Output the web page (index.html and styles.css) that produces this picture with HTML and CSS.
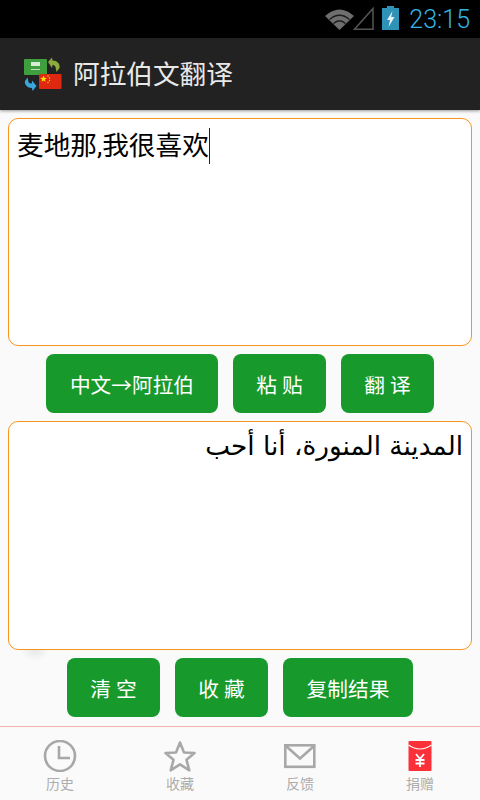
FILE: index.html
```html
<!DOCTYPE html>
<html lang="zh-CN">
<head>
    <meta charset="UTF-8">
    <meta name="viewport" content="width=device-width, initial-scale=1.0">
    <title>阿拉伯文翻译</title>
    <link rel="stylesheet" href="styles.css">
</head>
<body>
    <div class="app">
        <!-- 状态栏 -->
        <div class="status-bar">
            <svg class="icon-wifi" width="29" height="24" viewBox="326 6 29 24">
                <path d="M326 16 Q340.5 3 355 16 L340.5 30 Z" fill="#6e6e6e"/>
                <path d="M330.5 19.5 Q340.5 11 350.5 19.5 M334.5 23.5 Q340.5 18 346.5 23.5" fill="none" stroke="#1c1c1c" stroke-width="1.3"/>
            </svg>
            <svg class="icon-signal" width="21" height="24" viewBox="354 6 21 24">
                <path d="M374 8.5 V29.2 H355.5 Z" fill="none" stroke="#555" stroke-width="1.5"/>
            </svg>
            <svg class="icon-battery" width="17" height="24" viewBox="383 6 17 24">
                <path d="M388 6 H395 V8 H400 V30 H383 V8 H388 Z" fill="#2f93b8"/>
                <path d="M393.5 11 L388 20 H391 L389.5 27 L395.5 17 H392.2 Z" fill="#e4f2f7"/>
            </svg>
            <span class="clock">23:15</span>
        </div>

        <!-- 标题栏 -->
        <div class="action-bar">
            <svg class="logo" width="48" height="42" viewBox="20 52 48 42">
                <rect x="24" y="59" width="23" height="16" rx="1" fill="#3f9f3f"/>
                <rect x="31" y="62" width="9" height="4" fill="#d8ecd8"/>
                <rect x="31" y="69" width="9" height="1" fill="#bfe0bf"/>
                <path d="M48 62 L52 57.5 L52.5 60.5 C57 60.5 60.5 64 59.5 68 L56.5 72 L55.5 67 C55 65.5 53.5 65 52.5 65 L52 68 Z" fill="#8bab3c"/>
                <path d="M36.5 86 L32.5 91 L32 88 C27.5 88 24 84.5 25 81 L27.5 77.5 L28.5 82 C29 83 30.5 83.5 31.8 83.5 L32 80.5 Z" fill="#3aa6dc"/>
                <rect x="39" y="74" width="22.5" height="15" rx="1" fill="#de2910"/>
                <path d="M43.5 75.5 l.9 2.3 2.4 .1 -1.9 1.5 .7 2.4 -2.1 -1.4 -2.1 1.4 .7 -2.4 -1.9 -1.5 2.4 -.1 Z" fill="#ffde00"/>
                <circle cx="48" cy="76" r=".7" fill="#ffde00"/>
                <circle cx="49.5" cy="78" r=".7" fill="#ffde00"/>
                <circle cx="49.5" cy="80.5" r=".7" fill="#ffde00"/>
                <circle cx="48" cy="82.5" r=".7" fill="#ffde00"/>
            </svg>
            <h1 class="title">阿拉伯文翻译</h1>
        </div>

        <!-- 主体 -->
        <div class="content">
            <div class="text-box">
                <div class="box-text">麦地那,我很喜欢<span class="cursor"></span></div>
            </div>
            <div class="btn-row">
                <button class="btn btn-mode">中文→阿拉伯</button>
                <button class="btn btn-small">粘 贴</button>
                <button class="btn btn-small">翻 译</button>
            </div>
            <div class="text-box text-box-result">
                <div class="box-text box-text-ar" dir="rtl" lang="ar">المدينة المنورة، أنا أحب</div>
            </div>
            <div class="btn-row">
                <button class="btn btn-small">清 空</button>
                <button class="btn btn-small">收 藏</button>
                <button class="btn btn-copy">复制结果</button>
            </div>
            <div class="scroll-ghost"></div>
        </div>

        <!-- 底部导航 -->
        <div class="tab-bar">
            <div class="tab">
                <svg width="34" height="32" viewBox="0 0 34 32">
                    <circle cx="17" cy="16" r="15" fill="none" stroke="#a8a8a8" stroke-width="2.6"/>
                    <path d="M16 6 V18 H27" fill="none" stroke="#a8a8a8" stroke-width="2.6"/>
                </svg>
                <span class="tab-label">历史</span>
            </div>
            <div class="tab">
                <svg width="34" height="32" viewBox="0 0 34 32">
                    <path d="M17 2.5 L21 12.5 L31.5 13 L23.5 19.8 L26.3 30.3 L17 24.4 L7.7 30.3 L10.5 19.8 L2.5 13 L13 12.5 Z" fill="none" stroke="#a8a8a8" stroke-width="2.6" stroke-linejoin="round"/>
                </svg>
                <span class="tab-label">收藏</span>
            </div>
            <div class="tab">
                <svg width="34" height="32" viewBox="0 0 34 32">
                    <rect x="2.3" y="5.3" width="29" height="21.5" fill="none" stroke="#a8a8a8" stroke-width="2.6"/>
                    <path d="M3 6 L17 18.5 L31 6" fill="none" stroke="#a8a8a8" stroke-width="2.6"/>
                </svg>
                <span class="tab-label">反馈</span>
            </div>
            <div class="tab">
                <svg width="34" height="32" viewBox="0 0 34 32">
                    <path d="M6.5 1 H27.5 Q28.5 1 28.5 2 V30 Q28.5 31 27.5 31 H6.5 Q5.5 31 5.5 30 V2 Q5.5 1 6.5 1 Z" fill="#fb3038"/>
                    <path d="M5.5 5 Q17 13 28.5 5" fill="none" stroke="#fff" stroke-width="1.2"/>
                    <path d="M13 14 L17 19 L21 14 M17 19 V27 M12.5 20 H21.5 M12.5 23.5 H21.5" fill="none" stroke="#fff" stroke-width="1.8"/>
                </svg>
                <span class="tab-label">捐赠</span>
            </div>
        </div>
    </div>
</body>
</html>
```

FILE: styles.css
```css
* {
    box-sizing: border-box;
}
body {
    margin: 0;
    font-family: 'Roboto', 'Noto Sans CJK SC', sans-serif;
    background: #fafafa;
}
.app {
    width: 480px;
    height: 800px;
    display: flex;
    flex-direction: column;
    overflow: hidden;
}
.status-bar {
    height: 38px;
    background: #000;
    display: flex;
    align-items: center;
    justify-content: flex-end;
    padding-right: 10px;
}
.status-bar svg {
    flex: none;
    margin-bottom: 2px;
}
.icon-signal {
    margin-left: -1px;
}
.icon-battery {
    margin-left: 8px;
}
.clock {
    margin-left: 10px;
    color: #33b5e5;
    font-size: 25px;
    font-weight: 300;
}
.action-bar {
    height: 72px;
    background: #222;
    display: flex;
    align-items: center;
    padding-left: 20px;
    box-shadow: 0 1px 3px rgba(0,0,0,0.4);
}
.logo {
    flex: none;
    margin-bottom: 2px;
}
.title {
    margin: 0 0 3px 5px;
    font-size: 26.67px;
    font-weight: 400;
    color: #e8e8e8;
}
.content {
    position: relative;
    flex: 1;
    padding: 8px 8px 0;
    display: flex;
    flex-direction: column;
}
.text-box {
    position: relative;
    z-index: 1;
    height: 228px;
    background: #fff;
    border: 1px solid #f7941d;
    border-radius: 10px;
    padding: 9px 8px;
}
.text-box-result {
    height: 229px;
}
.box-text {
    font-size: 26.67px;
    line-height: 36px;
    color: #000;
}
.box-text-ar {
    font-family: 'DejaVu Sans', sans-serif;
    font-size: 26.3px;
    margin-top: -3px;
}
.cursor {
    display: inline-block;
    width: 1px;
    height: 36px;
    background: #222;
    vertical-align: top;
}
.btn-row {
    height: 75px;
    display: flex;
    justify-content: center;
    gap: 15px;
    padding-top: 8px;
}
.btn {
    height: 59px;
    border: none;
    border-radius: 8px;
    background: #17992c;
    color: #fff;
    font-family: inherit;
    font-size: 20.7px;
    padding: 0;
}
.btn-mode {
    width: 172px;
}
.btn-small {
    width: 93px;
}
.btn-copy {
    width: 130px;
}
/* 输入框下方的淡灰色残影 */
.scroll-ghost {
    position: absolute;
    left: 20px;
    top: 536px;
    width: 30px;
    height: 16px;
    background: radial-gradient(ellipse at center top, #e2e2e2, rgba(250,250,250,0) 70%);
}
.tab-bar {
    height: 74px;
    border-top: 1px solid #f2b0b0;
    display: flex;
    background: #fafafa;
}
.tab {
    flex: 1;
    display: flex;
    flex-direction: column;
    align-items: center;
    padding-top: 13px;
}
.tab-label {
    margin-top: 2px;
    font-size: 14px;
    line-height: 20px;
    color: #adadad;
}
```
